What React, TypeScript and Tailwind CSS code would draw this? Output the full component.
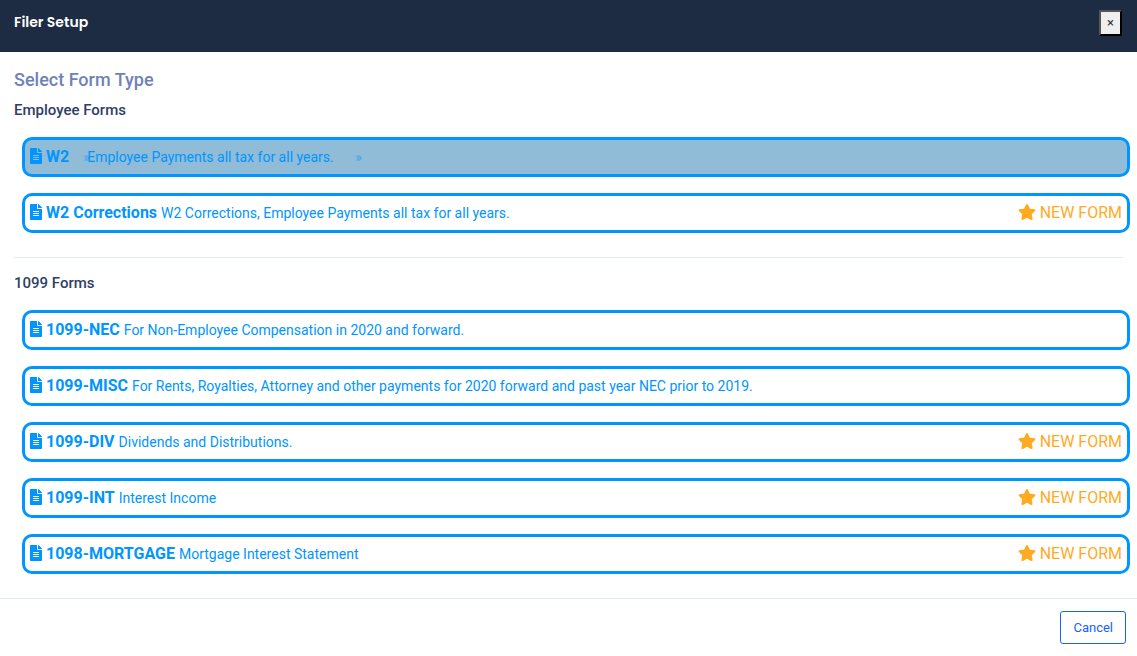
import React, { useState } from 'react';
import { FaFileAlt, FaStar } from 'react-icons/fa';

interface FormType {
  name: string;
  description: string;
  isNew?: boolean;
}

const employeeForms: FormType[] = [
  { name: 'W2', description: 'Employee Payments all tax for all years.' },
  { name: 'W2 Corrections', description: 'W2 Corrections, Employee Payments all tax for all years.', isNew: true },
];

const forms1099: FormType[] = [
  { name: '1099-NEC', description: 'For Non-Employee Compensation in 2020 and forward.' },
  { name: '1099-MISC', description: 'For Rents, Royalties, Attorney and other payments for 2020 forward and past year NEC prior to 2019.' },
  { name: '1099-DIV', description: 'Dividends and Distributions.', isNew: true },
  { name: '1099-INT', description: 'Interest Income', isNew: true },
  { name: '1098-MORTGAGE', description: 'Mortgage Interest Statement', isNew: true },
];

interface RowProps {
  form: FormType;
  active: boolean;
  onSelect: (name: string) => void;
}

const FormRow: React.FC<RowProps> = ({ form, active, onSelect }) => (
  <button
    type="button"
    aria-pressed={active}
    onClick={() => onSelect(form.name)}
    className={`flex min-h-10 w-full items-center gap-1 rounded-[10px] border-3 border-[#0095ff] px-[5px] text-left text-[#0095ff] ${active ? 'bg-[#90bcd8]' : 'bg-white'}`}
  >
    <FaFileAlt className="mb-0.5 h-4 w-3 shrink-0" />
    <span className="shrink-0 text-base leading-6 font-bold">{form.name}</span>
    {active ? (
      <span className="relative ml-[14px] pr-6 text-sm leading-6">
        <span aria-hidden="true" className="absolute top-0 -left-1 opacity-60">»</span>
        {form.description}
        <span aria-hidden="true" className="absolute top-0 -right-1 opacity-60">»</span>
      </span>
    ) : (
      <span className="text-sm leading-6">{form.description}</span>
    )}
    {form.isNew && (
      <span className="ml-auto flex shrink-0 items-center gap-1 text-base leading-6 text-[#ffaa1f]">
        <FaStar className="mb-0.5 h-4 w-[18px]" />
        NEW FORM
      </span>
    )}
  </button>
);

export default function App() {
  const [selected, setSelected] = useState('W2');

  const renderRows = (forms: FormType[]) => (
    <div className="flex flex-col gap-4 pr-[7px] pl-[22px]">
      {forms.map((form) => (
        <FormRow key={form.name} form={form} active={selected === form.name} onSelect={setSelected} />
      ))}
    </div>
  );

  return (
    <div className="min-h-screen bg-white font-[Roboto,sans-serif]">
      <header className="flex items-start justify-between bg-[#1d2c42] px-[14px] pt-[10px] pb-4">
        <h1 className="font-[Poppins,Inter,sans-serif] text-sm leading-6 font-semibold text-white">Filer Setup</h1>
        <button
          type="button"
          aria-label="Close"
          className="mr-px h-[26px] w-[23px] border-2 border-t-[#555] border-r-black border-b-black border-l-[#555] bg-[#efefef] text-[13px] leading-5 text-[#333]"
        >
          ×
        </button>
      </header>

      <main className="pt-4 pb-6">
        <h2 className="px-[14px] text-lg leading-6 font-medium text-[#7081b9]">Select Form Type</h2>
        <section>
          <h3 className="mt-2 mb-[17px] px-[14px] text-[15px] leading-5 font-medium text-[#303e67]">Employee Forms</h3>
          {renderRows(employeeForms)}
        </section>
        <hr className="mx-[14px] mt-6 border-[#e3ebf6]" />
        <section>
          <h3 className="mt-[15px] mb-[17px] px-[14px] text-[15px] leading-5 font-medium text-[#303e67]">1099 Forms</h3>
          {renderRows(forms1099)}
        </section>
      </main>

      <footer className="flex justify-end border-t border-[#e3ebf6] px-[11px] py-3">
        <button
          type="button"
          className="rounded-[3px] border border-[#1761fd] px-3 py-1.5 text-[13px] leading-[19px] text-[#1761fd]"
        >
          Cancel
        </button>
      </footer>
    </div>
  );
}
